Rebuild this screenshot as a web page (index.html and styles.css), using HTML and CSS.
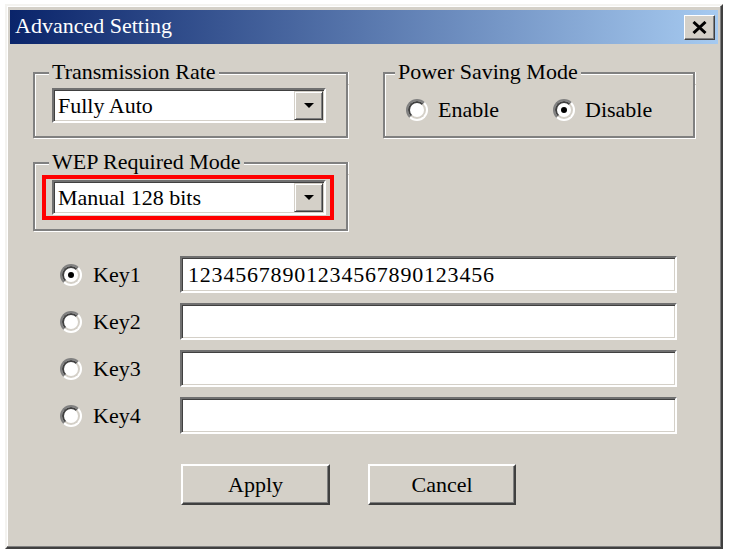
FILE: index.html
```html
<!DOCTYPE html>
<html lang="en">
<head>
    <meta charset="UTF-8">
    <meta name="viewport" content="width=device-width, initial-scale=1.0">
    <title>Advanced Setting</title>
    <link rel="stylesheet" href="styles.css">
</head>

<body>
    <div class="window">
        <div class="titlebar">
            <span class="title">Advanced Setting</span>
            <span class="close-btn" title="Close">
                <svg width="15" height="13" viewBox="0 0 15 13">
                    <path d="M1.5 1 L13.5 12 M13.5 1 L1.5 12" stroke="#000" stroke-width="3" fill="none"/>
                </svg>
            </span>
        </div>

        <div class="client">
            <div class="top-row">
                <div class="group group-rate">
                    <div class="group-head"><span class="legend">Transmission Rate</span></div>
                    <div class="group-body">
                        <div class="combo">
                            <span class="combo-text">Fully Auto</span>
                            <span class="drop-btn"><span class="arrow"></span></span>
                        </div>
                    </div>
                </div>

                <div class="group group-power">
                    <div class="group-head"><span class="legend">Power Saving Mode</span></div>
                    <div class="group-body">
                        <label class="opt opt-first"><span class="radio"><span class="radio-in"></span></span>Enable</label>
                        <label class="opt"><span class="radio on"><span class="radio-in"></span></span>Disable</label>
                    </div>
                </div>
            </div>

            <div class="group group-wep">
                <div class="group-head"><span class="legend">WEP Required Mode</span></div>
                <div class="group-body">
                    <div class="highlight">
                        <div class="combo">
                            <span class="combo-text">Manual 128 bits</span>
                            <span class="drop-btn"><span class="arrow"></span></span>
                        </div>
                    </div>
                </div>
            </div>

            <div class="keys">
                <div class="key-row">
                    <span class="radio on"><span class="radio-in"></span></span>
                    <span class="key-label">Key1</span>
                    <input class="field" type="text" value="12345678901234567890123456" readonly>
                </div>
                <div class="key-row">
                    <span class="radio"><span class="radio-in"></span></span>
                    <span class="key-label">Key2</span>
                    <input class="field" type="text" value="" readonly>
                </div>
                <div class="key-row">
                    <span class="radio"><span class="radio-in"></span></span>
                    <span class="key-label">Key3</span>
                    <input class="field" type="text" value="" readonly>
                </div>
                <div class="key-row">
                    <span class="radio"><span class="radio-in"></span></span>
                    <span class="key-label">Key4</span>
                    <input class="field" type="text" value="" readonly>
                </div>
            </div>

            <div class="buttons">
                <button class="btn btn-apply">Apply</button>
                <button class="btn btn-cancel">Cancel</button>
            </div>
        </div>
    </div>
</body>
</html>
```

FILE: styles.css
```css
body {
    font-family: "Liberation Serif", "DejaVu Serif", "Times New Roman", serif;
    font-size: 22px;
    color: #000;
    background-color: #fff;
    margin: 0;
}

.window {
    margin: 4px 0 0 5px;
    width: 718px;
    height: 545px;
    box-sizing: border-box;
    display: flex;
    flex-direction: column;
    background: #d4d0c8;
    border: 2px solid;
    border-color: #f4f3f0 #404040 #404040 #f4f3f0;
    box-shadow: inset -1px -1px 0 #808080, inset 1px 1px 0 #fff;
    padding: 4px 3px 3px 3px;
}

/* title bar */
.titlebar {
    height: 34px;
    display: flex;
    align-items: center;
    justify-content: space-between;
    background: linear-gradient(to right, #0a246a, #a6caf0);
    padding: 0 3px 0 5px;
}

.title {
    color: #fff;
    line-height: 30px;
    padding-bottom: 3px;
}

.close-btn {
    width: 31px;
    height: 25px;
    box-sizing: border-box;
    display: flex;
    align-items: center;
    justify-content: center;
    background: #d4d0c8;
    border: 1px solid;
    border-color: #fff #404040 #404040 #fff;
    box-shadow: inset -1px -1px 0 #808080;
}

.client {
    flex: 1;
    padding: 16px 0 0 23px;
}

/* group boxes */
.top-row {
    display: flex;
    gap: 35px;
    margin-bottom: 12px;
}

.group {
    display: flex;
    flex-direction: column;
}

.group-rate,
.group-wep {
    width: 315px;
}

.group-power {
    width: 312px;
}

.group-head {
    display: flex;
    height: 24px;
}

.group-head::before,
.group-head::after {
    content: '';
    align-self: flex-end;
    height: 12px;
    border-top: 2px solid #808080;
    box-sizing: border-box;
}

.group-head::before {
    width: 16px;
    border-left: 2px solid #808080;
    box-shadow: inset 1px 1px 0 #fff;
}

.group-power .group-head::before {
    width: 12px;
}

.group-head::after {
    flex: 1;
    border-right: 2px solid #808080;
    box-shadow: inset 0 1px 0 #fff, 1px 0 0 #fff;
}

.legend {
    line-height: 24px;
    padding: 0 3px;
    white-space: nowrap;
}

.group-body {
    flex: 1;
    border: 2px solid #808080;
    border-top: 0;
    box-shadow: inset 1px 0 0 #fff, 1px 1px 0 #fff;
}

.group-rate .group-body {
    padding: 4px 20px 13px 17px;
}

.group-power .group-body {
    display: flex;
    align-items: center;
    padding: 0 0 0 21px;
}

.group-wep .group-body {
    padding: 1px 0 9px 7px;
}

.opt {
    display: flex;
    align-items: center;
    gap: 10px;
}

.opt-first {
    width: 147px;
}

.highlight {
    width: 292px;
    box-sizing: border-box;
    border: 4px solid #ff0000;
    padding: 1px 4px 1px 6px;
}

/* combo box */
.combo {
    width: 274px;
    height: 35px;
    box-sizing: border-box;
    display: flex;
    background: #fff;
    border: 2px solid;
    border-color: #707070 #fff #fff #707070;
    box-shadow: inset 1px 1px 0 #404040, inset -1px -1px 0 #d4d0c8;
    padding: 1px;
}

.combo-text {
    flex: 1;
    line-height: 29px;
    padding-left: 3px;
}

.drop-btn {
    width: 29px;
    box-sizing: border-box;
    display: flex;
    align-items: center;
    justify-content: center;
    background: #d4d0c8;
    border: 1px solid;
    border-color: #d4d0c8 #404040 #404040 #d4d0c8;
    box-shadow: inset 1px 1px 0 #fff, inset -1px -1px 0 #808080;
}

.arrow {
    width: 0;
    height: 0;
    border-left: 5px solid transparent;
    border-right: 5px solid transparent;
    border-top: 5px solid #000;
}

/* radio buttons */
.radio {
    width: 22px;
    height: 22px;
    flex: none;
    box-sizing: border-box;
    border-radius: 50%;
    border: 2px solid;
    border-color: #808080 #fff #fff #808080;
    background: #fff;
    display: flex;
}

.radio-in {
    flex: 1;
    border-radius: 50%;
    border: 2px solid;
    border-color: #404040 #d4d0c8 #d4d0c8 #404040;
    display: flex;
    align-items: center;
    justify-content: center;
}

.radio.on .radio-in::after {
    content: '';
    width: 6px;
    height: 6px;
    border-radius: 50%;
    background: #000;
}

/* key rows */
.keys {
    display: flex;
    flex-direction: column;
    gap: 10px;
    margin-top: 25px;
    padding-left: 27px;
}

.key-row {
    display: flex;
    align-items: center;
}

.key-label {
    width: 87px;
    margin-left: 11px;
}

.field {
    width: 497px;
    height: 37px;
    box-sizing: border-box;
    margin: 0;
    font-family: inherit;
    font-size: 22px;
    letter-spacing: 0.8px;
    color: #000;
    background: #fff;
    border: 2px solid;
    border-color: #707070 #fff #fff #707070;
    box-shadow: inset 1px 1px 0 #404040, inset -1px -1px 0 #d4d0c8;
    padding: 0 0 0 6px;
    outline: none;
}

/* buttons */
.buttons {
    display: flex;
    gap: 38px;
    margin: 30px 0 0 148px;
}

.btn {
    height: 41px;
    box-sizing: border-box;
    font-family: inherit;
    font-size: 22px;
    color: #000;
    background: #d4d0c8;
    border: 2px solid;
    border-color: #fff #404040 #404040 #fff;
    box-shadow: inset -1px -1px 0 #808080;
    padding: 0;
}

.btn-apply {
    width: 149px;
}

.btn-cancel {
    width: 148px;
}
```
